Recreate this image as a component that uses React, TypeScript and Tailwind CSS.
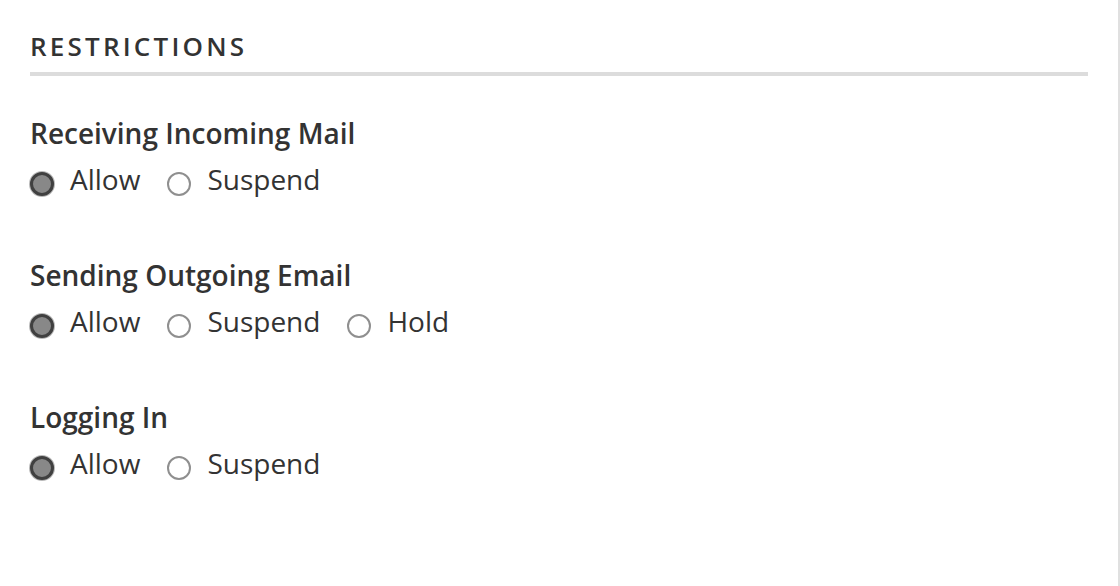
import React, { useState } from 'react';

type Option = { value: string; label: string };

interface RestrictionProps {
  title: string;
  name: string;
  options: Option[];
  value: string;
  onChange: (v: string) => void;
}

const Radio: React.FC<{ checked: boolean }> = ({ checked }) =>
  checked ? (
    <span className="mt-[11px] h-[24px] w-[24px] shrink-0 rounded-full border-[3px] border-[#404040] bg-[#888888] shadow-[0_0_0_1px_#b8b8b8]" />
  ) : (
    <span className="mt-[11px] h-[24px] w-[24px] shrink-0 rounded-full border-2 border-[#8f8f8f] bg-white" />
  );

const Restriction: React.FC<RestrictionProps> = ({ title, name, options, value, onChange }) => (
  <div>
    <div className="text-[28px] leading-[36px] font-semibold text-[#333333]">{title}</div>
    <div className="mt-[10px] flex gap-[27px]">
      {options.map((o) => (
        <label
          key={o.value}
          className="flex items-start gap-[16px] cursor-pointer"
          onClick={() => onChange(o.value)}
        >
          <input type="radio" name={name} className="hidden" readOnly checked={value === o.value} />
          <Radio checked={value === o.value} />
          <span className="text-[28px] leading-[36px] text-[#333333]">{o.label}</span>
        </label>
      ))}
    </div>
  </div>
);

const App: React.FC = () => {
  const [incoming, setIncoming] = useState('allow');
  const [outgoing, setOutgoing] = useState('allow');
  const [login, setLogin] = useState('allow');

  return (
    <div className="h-[586px] w-full bg-white border-r-2 border-[#e0e0e0] font-['Open_Sans',sans-serif] overflow-hidden">
      <div className="pl-[30px] pr-[30px] pt-[28px]">
        {/* Section header */}
        <h2 className="text-[26px] leading-[36px] font-semibold tracking-[3.2px] text-[#333333]">RESTRICTIONS</h2>
        <div className="mt-[8px] h-[4px] bg-[#dcdcdc]" />

        <div className="mt-[39px] flex flex-col gap-[60px]">
          <Restriction
            title="Receiving Incoming Mail"
            name="incoming"
            value={incoming}
            onChange={setIncoming}
            options={[
              { value: 'allow', label: 'Allow' },
              { value: 'suspend', label: 'Suspend' },
            ]}
          />
          <Restriction
            title="Sending Outgoing Email"
            name="outgoing"
            value={outgoing}
            onChange={setOutgoing}
            options={[
              { value: 'allow', label: 'Allow' },
              { value: 'suspend', label: 'Suspend' },
              { value: 'hold', label: 'Hold' },
            ]}
          />
          <Restriction
            title="Logging In"
            name="login"
            value={login}
            onChange={setLogin}
            options={[
              { value: 'allow', label: 'Allow' },
              { value: 'suspend', label: 'Suspend' },
            ]}
          />
        </div>
      </div>
    </div>
  );
};

export default App;
